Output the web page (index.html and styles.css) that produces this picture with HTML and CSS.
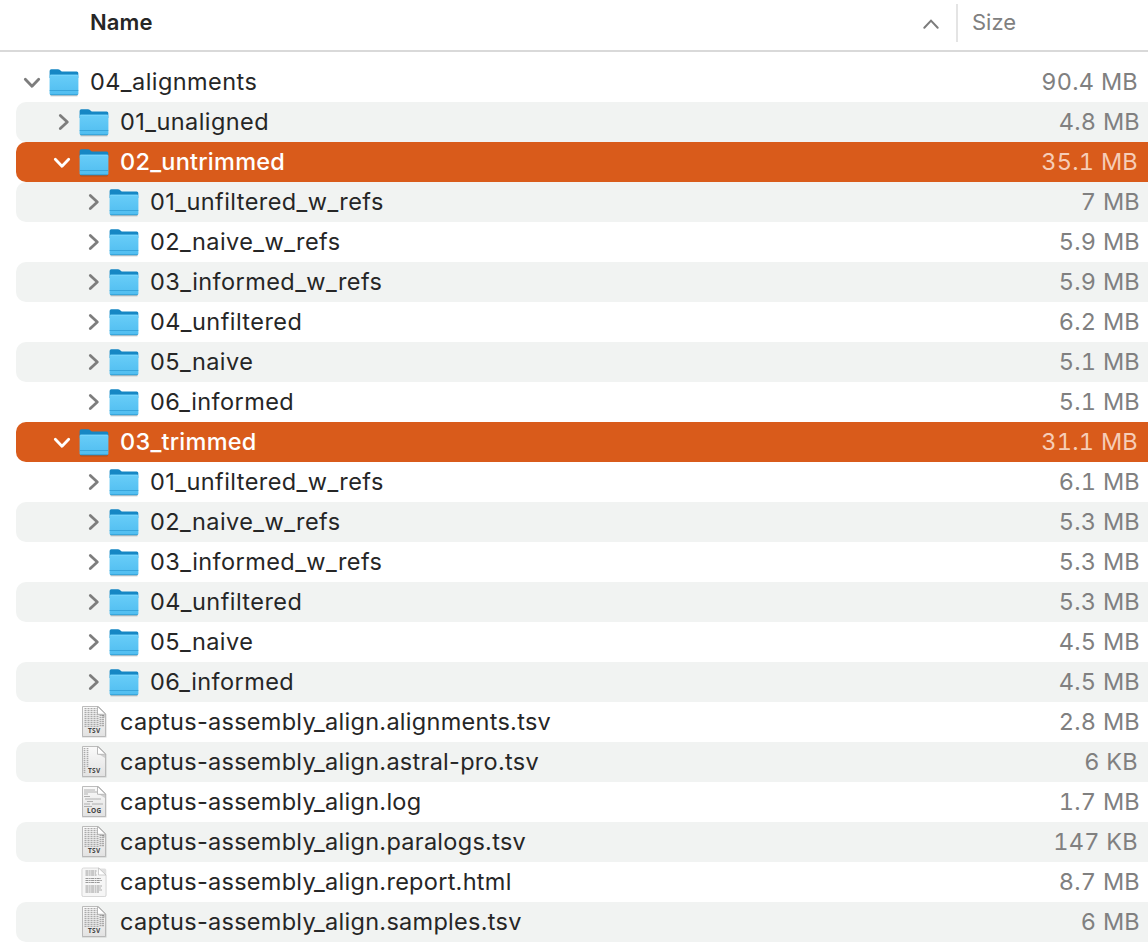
FILE: index.html
```
<!DOCTYPE html>
<html lang="en">
<head>
<meta charset="utf-8">
<title>04_alignments</title>
<link rel="stylesheet" href="styles.css">
</head>
<body>
<svg class="defs" width="0" height="0">
  <defs>
    <linearGradient id="front" x1="0" y1="0" x2="0" y2="1"><stop offset="0" stop-color="#68cdf8"/><stop offset="1" stop-color="#50bdf0"/></linearGradient>
    <linearGradient id="paper" x1="0" y1="0" x2="0" y2="1"><stop offset="0" stop-color="#fafafa"/><stop offset="1" stop-color="#e2e2e2"/></linearGradient>
    <symbol id="folder" viewBox="0 0 32 32">
      <path d="M2.500 29.600h27" stroke="#000" stroke-opacity=".25" stroke-width="1.400"/>
      <path d="M1.600 5Q1.600 3.300 3.300 3.300H10Q11 3.300 12 4.100L13 5Q13.700 5.500 15 5.500H28.700Q30.300 5.500 30.300 7V12H1.600Z" fill="#1687c4"/>
      <path d="M1.600 10Q1.600 8.700 3 8.700H29Q30.400 8.700 30.400 10V27.600Q30.400 29.200 28.800 29.200H3.200Q1.600 29.200 1.600 27.600Z" fill="url(#front)"/>
      <path d="M2.400 9.200H29.600" stroke="#83dcff" stroke-width=".8"/>
      <path d="M1.700 24.500H30.300" stroke="#35a2d8" stroke-width=".9"/>
      <path d="M2.200 28.500H29.800" stroke="#37a5da" stroke-width=".9"/>
    </symbol>
    <symbol id="closed" viewBox="0 0 32 32"><path d="M14.300 9.500L21.300 16L14.300 22.500"/></symbol>
    <symbol id="open" viewBox="0 0 32 32"><path d="M9.300 13.300L16 20.300L22.700 13.300"/></symbol>
    <symbol id="page" viewBox="0 0 32 36">
      <path d="M4 3.500H21.500L28.500 10.500V33.500H4Z" fill="#000" fill-opacity=".16"/>
      <path d="M4.500 2.500H20.500L27.500 9.500V32.500H4.500Z" fill="url(#paper)" stroke="#b4b4b4" stroke-width=".9"/>
    </symbol>
    <symbol id="fold" viewBox="0 0 32 36">
      <path d="M19 9L27 11V14Z" fill="#000" fill-opacity=".15"/>
      <path d="M19.500 2.500V10.300H27.500Z" fill="#fff" stroke="#aaa" stroke-width=".8"/>
    </symbol>
    <symbol id="tsv" viewBox="0 0 32 36">
      <use href="#page"/>
      <path d="M7.500 4V23M10.500 4V23M13.500 4V23M16.500 4V23M19.500 4V23M22.500 11V23M25 11V23" stroke="#aaa" stroke-width="2" stroke-dasharray="1.200 .8"/>
      <use href="#fold"/><text x="16.200" y="29.200">TSV</text>
    </symbol>
    <symbol id="tsv-narrow" viewBox="0 0 32 36">
      <use href="#page"/>
      <path d="M6.500 4V29M9.500 4V23" stroke="#aaa" stroke-width="1.700" stroke-dasharray="1.200 .8"/>
      <use href="#fold"/><text x="16.200" y="29.200">TSV</text>
    </symbol>
    <symbol id="log" viewBox="0 0 32 36">
      <use href="#page"/>
      <path d="M6 6H17M6 8H19M6 10H10M6 12.500H12M7 15H23M9 17.500H15M6 20H12M14 20H25M6 22.500H14" stroke="#b0b0b0" stroke-width="1"/>
      <use href="#fold"/><text x="16.200" y="29.200">LOG</text>
    </symbol>
    <symbol id="html" viewBox="0 0 32 36">
      <rect x="3.700" y="4.500" width="24.600" height="28.500" rx="1.500" fill="#000" fill-opacity=".12"/>
      <path d="M5.500 4H21L28 11V31Q28 32.500 26.500 32.500H5.500Q4 32.500 4 31V5.500Q4 4 5.500 4Z" fill="#f6f6f6" stroke="#d2d2d2" stroke-width=".8"/>
      <path d="M7.500 7H19M7.500 9H18M7.500 11H19M7.500 14.500H23M7.500 16.500H24M7.500 18.500H22M7.500 22H24M7.500 24H23M7.500 26H24M7.500 28H21" stroke="#999" stroke-width="1.100" stroke-dasharray="3 .6 1.500 .5"/>
      <path d="M20.500 4V11H28Z" fill="#fff" stroke="#bbb" stroke-width=".7"/>
    </symbol>
  </defs>
</svg>
<header class="header">
  <span class="col-name">Name</span>
  <svg class="sort" width="18" height="12" viewBox="0 0 18 12"><path d="M2.300 9.800L9 2.600L15.700 9.800"/></svg>
  <span class="col-size">Size</span>
</header>
<main class="list">
  <div class="row"><svg class="arrow"><use href="#open"/></svg><svg class="icon"><use href="#folder"/></svg><span class="name">04_alignments</span><span class="size wide">90.4 MB</span></div>
  <div class="row l1"><svg class="arrow"><use href="#closed"/></svg><svg class="icon"><use href="#folder"/></svg><span class="name">01_unaligned</span><span class="size">4.8 MB</span></div>
  <div class="row l1 selected"><svg class="arrow"><use href="#open"/></svg><svg class="icon"><use href="#folder"/></svg><span class="name">02_untrimmed</span><span class="size wide">35.1 MB</span></div>
  <div class="row l2"><svg class="arrow"><use href="#closed"/></svg><svg class="icon"><use href="#folder"/></svg><span class="name">01_unfiltered_w_refs</span><span class="size">7 MB</span></div>
  <div class="row l2"><svg class="arrow"><use href="#closed"/></svg><svg class="icon"><use href="#folder"/></svg><span class="name">02_naive_w_refs</span><span class="size">5.9 MB</span></div>
  <div class="row l2"><svg class="arrow"><use href="#closed"/></svg><svg class="icon"><use href="#folder"/></svg><span class="name">03_informed_w_refs</span><span class="size">5.9 MB</span></div>
  <div class="row l2"><svg class="arrow"><use href="#closed"/></svg><svg class="icon"><use href="#folder"/></svg><span class="name">04_unfiltered</span><span class="size">6.2 MB</span></div>
  <div class="row l2"><svg class="arrow"><use href="#closed"/></svg><svg class="icon"><use href="#folder"/></svg><span class="name">05_naive</span><span class="size">5.1 MB</span></div>
  <div class="row l2"><svg class="arrow"><use href="#closed"/></svg><svg class="icon"><use href="#folder"/></svg><span class="name">06_informed</span><span class="size">5.1 MB</span></div>
  <div class="row l1 selected"><svg class="arrow"><use href="#open"/></svg><svg class="icon"><use href="#folder"/></svg><span class="name">03_trimmed</span><span class="size wide">31.1 MB</span></div>
  <div class="row l2"><svg class="arrow"><use href="#closed"/></svg><svg class="icon"><use href="#folder"/></svg><span class="name">01_unfiltered_w_refs</span><span class="size">6.1 MB</span></div>
  <div class="row l2"><svg class="arrow"><use href="#closed"/></svg><svg class="icon"><use href="#folder"/></svg><span class="name">02_naive_w_refs</span><span class="size">5.3 MB</span></div>
  <div class="row l2"><svg class="arrow"><use href="#closed"/></svg><svg class="icon"><use href="#folder"/></svg><span class="name">03_informed_w_refs</span><span class="size">5.3 MB</span></div>
  <div class="row l2"><svg class="arrow"><use href="#closed"/></svg><svg class="icon"><use href="#folder"/></svg><span class="name">04_unfiltered</span><span class="size">5.3 MB</span></div>
  <div class="row l2"><svg class="arrow"><use href="#closed"/></svg><svg class="icon"><use href="#folder"/></svg><span class="name">05_naive</span><span class="size">4.5 MB</span></div>
  <div class="row l2"><svg class="arrow"><use href="#closed"/></svg><svg class="icon"><use href="#folder"/></svg><span class="name">06_informed</span><span class="size">4.5 MB</span></div>
  <div class="row l1 file"><svg class="icon"><use href="#tsv"/></svg><span class="name">captus-assembly_align.alignments.tsv</span><span class="size">2.8 MB</span></div>
  <div class="row l1 file"><svg class="icon"><use href="#tsv-narrow"/></svg><span class="name">captus-assembly_align.astral-pro.tsv</span><span class="size wide">6 KB</span></div>
  <div class="row l1 file"><svg class="icon"><use href="#log"/></svg><span class="name">captus-assembly_align.log</span><span class="size">1.7 MB</span></div>
  <div class="row l1 file"><svg class="icon"><use href="#tsv"/></svg><span class="name">captus-assembly_align.paralogs.tsv</span><span class="size wide">147 KB</span></div>
  <div class="row l1 file"><svg class="icon"><use href="#html"/></svg><span class="name">captus-assembly_align.report.html</span><span class="size">8.7 MB</span></div>
  <div class="row l1 file"><svg class="icon"><use href="#tsv"/></svg><span class="name">captus-assembly_align.samples.tsv</span><span class="size">6 MB</span></div>
</main>
</body>
</html>
```
FILE: styles.css
```
* { box-sizing: border-box; }
body {
  margin: 0;
  height: 944px;
  overflow: hidden;
  background: #fff;
  color: #262626;
  font-family: Inter, "Liberation Sans", sans-serif;
}
.defs { display: block; height: 0; }
.header {
  display: flex;
  height: 52px;
  padding: 4px 0 0 90px;
  border-bottom: 2px solid #d9d9d9;
  font-size: 22px;
  line-height: 37px;
}
.col-name { flex: 1; font-weight: 600; letter-spacing: .1px; }
.sort { margin: 14px 16px 0 0; fill: none; stroke: #7c7c7c; stroke-width: 2; stroke-linecap: round; }
.col-size { width: 192px; height: 38px; padding-left: 14px; border-left: 2px solid #e4e4e4; color: #808080; }
.list { padding: 10px 0 0 16px; }
.row {
  display: flex;
  align-items: center;
  height: 40px;
  padding-right: 8px;
  border-radius: 10px 0 0 10px;
  font-size: 23.5px;
  line-height: 40px;
  white-space: nowrap;
}
.row:nth-child(even) { background: #f1f3f2; }
.l1 { padding-left: 30px; }
.l2 { padding-left: 60px; }
.row.selected { background: #d95b1b; color: #fff; font-weight: 500; }
.arrow { width: 32px; height: 32px; fill: none; stroke: #7d7d7d; stroke-width: 2.8; stroke-linecap: round; stroke-linejoin: round; }
.selected .arrow { stroke: #fff; }
.icon { width: 32px; height: 32px; margin-right: 10px; }
.file { padding-left: 62px; }
.file .icon { height: 36px; }
symbol text { font: 700 6.5px "Open Sans", sans-serif; text-anchor: middle; fill: #444; letter-spacing: .3px; }
.name { flex: 1; letter-spacing: .43px; }
.file .name { letter-spacing: .28px; }
.selected .name { letter-spacing: .24px; }
.size { color: #808080; letter-spacing: .25px; font-variant-numeric: tabular-nums; }
.size.wide { margin-right: 2px; }
.selected .size { color: #f6cdb7; font-weight: 400; }
```
